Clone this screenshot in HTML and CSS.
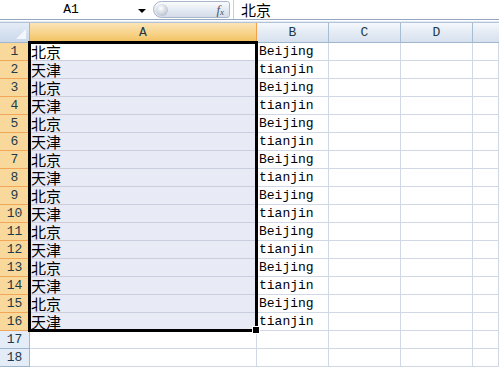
FILE: index.html
```html
<!DOCTYPE html>
<html>
<head>
<meta charset="utf-8">
<link rel="stylesheet" href="styles.css">
</head>
<body>
<div class="app">
  <div class="fbar">
    <div class="namebox"><span class="ref">A1</span><span class="arrow"></span></div>
    <div class="fxbtn"><span class="knob"></span><span class="fx">f<sub>x</sub></span></div>
    <div class="ftext">北京</div>
  </div>
  <div class="lines"></div>
  <div class="sheet">
    <div class="corner"><span class="tri"></span></div>
    <div class="ch sel">A</div><div class="ch">B</div><div class="ch">C</div><div class="ch">D</div><div class="ch last"></div>

    <div class="rh sel">1</div><div class="c a act cn">北京</div><div class="c">Beijing</div><div class="c"></div><div class="c"></div><div class="c"></div>
    <div class="rh sel">2</div><div class="c a cn">天津</div><div class="c">tianjin</div><div class="c"></div><div class="c"></div><div class="c"></div>
    <div class="rh sel">3</div><div class="c a cn">北京</div><div class="c">Beijing</div><div class="c"></div><div class="c"></div><div class="c"></div>
    <div class="rh sel">4</div><div class="c a cn">天津</div><div class="c">tianjin</div><div class="c"></div><div class="c"></div><div class="c"></div>
    <div class="rh sel">5</div><div class="c a cn">北京</div><div class="c">Beijing</div><div class="c"></div><div class="c"></div><div class="c"></div>
    <div class="rh sel">6</div><div class="c a cn">天津</div><div class="c">tianjin</div><div class="c"></div><div class="c"></div><div class="c"></div>
    <div class="rh sel">7</div><div class="c a cn">北京</div><div class="c">Beijing</div><div class="c"></div><div class="c"></div><div class="c"></div>
    <div class="rh sel">8</div><div class="c a cn">天津</div><div class="c">tianjin</div><div class="c"></div><div class="c"></div><div class="c"></div>
    <div class="rh sel">9</div><div class="c a cn">北京</div><div class="c">Beijing</div><div class="c"></div><div class="c"></div><div class="c"></div>
    <div class="rh sel">10</div><div class="c a cn">天津</div><div class="c">tianjin</div><div class="c"></div><div class="c"></div><div class="c"></div>
    <div class="rh sel">11</div><div class="c a cn">北京</div><div class="c">Beijing</div><div class="c"></div><div class="c"></div><div class="c"></div>
    <div class="rh sel">12</div><div class="c a cn">天津</div><div class="c">tianjin</div><div class="c"></div><div class="c"></div><div class="c"></div>
    <div class="rh sel">13</div><div class="c a cn">北京</div><div class="c">Beijing</div><div class="c"></div><div class="c"></div><div class="c"></div>
    <div class="rh sel">14</div><div class="c a cn">天津</div><div class="c">tianjin</div><div class="c"></div><div class="c"></div><div class="c"></div>
    <div class="rh sel">15</div><div class="c a cn">北京</div><div class="c">Beijing</div><div class="c"></div><div class="c"></div><div class="c"></div>
    <div class="rh sel">16</div><div class="c a cn">天津</div><div class="c">tianjin</div><div class="c"></div><div class="c"></div><div class="c"></div>
    <div class="rh">17</div><div class="c"></div><div class="c"></div><div class="c"></div><div class="c"></div><div class="c"></div>
    <div class="rh">18</div><div class="c"></div><div class="c"></div><div class="c"></div><div class="c"></div><div class="c"></div>

    <div class="selbox"></div>
    <div class="handle"></div>
  </div>
</div>
</body>
</html>
```

FILE: styles.css
```css
html, body {
  margin: 0;
  padding: 0;
  background: #ffffff;
}
.app {
  width: 499px;
  height: 368px;
  overflow: hidden;
  font-family: "Liberation Mono", "Noto Sans CJK SC", monospace;
  font-size: 13px;
  color: #000;
}
.fbar {
  display: flex;
  height: 19px;
  border-bottom: 1px solid #93a7c0;
  background: #fff;
}
.namebox {
  width: 153px;
  display: flex;
  align-items: center;
  position: relative;
}
.namebox .ref {
  flex: 1;
  text-align: center;
  padding-left: 4px;
  line-height: 19px;
}
.namebox .arrow {
  width: 0;
  height: 0;
  border-left: 4px solid transparent;
  border-right: 4px solid transparent;
  border-top: 4px solid #000;
  margin-right: 7px;
  margin-top: 2px;
}
.fxbtn {
  width: 77px;
  height: 17px;
  margin-top: 1px;
  box-sizing: border-box;
  border: 1px solid #a7b6ca;
  border-radius: 9px 3px 3px 9px;
  background: linear-gradient(#fafcfe, #e3e9f2 55%, #d5dde9);
  display: flex;
  align-items: center;
  justify-content: space-between;
  padding: 0 5px 0 2px;
}
.knob {
  width: 12px;
  height: 12px;
  border-radius: 50%;
  background: radial-gradient(circle at 40% 35%, #ffffff, #c9d0da 60%, #9ea8b6);
}
.fx {
  font-family: "Liberation Serif", serif;
  font-style: italic;
  font-size: 13px;
  color: #4a5566;
  line-height: 1;
}
.fx sub {
  font-size: 9px;
  vertical-align: -1px;
}
.ftext {
  flex: 1;
  border-left: 1px solid #c5d0de;
  margin-left: 3px;
  padding-left: 7px;
  font-family: "Noto Sans CJK SC", sans-serif;
  font-size: 15px;
  line-height: 19px;
}
.lines {
  height: 2px;
  border-top: 1px solid #fff;
  border-bottom: 1px solid #b3c2d6;
  background: #e6ecf4;
  box-sizing: content-box;
  height: 1px;
}
.sheet {
  position: relative;
  display: grid;
  grid-template-columns: 30px 227px 72px 72px 72px 1fr;
  grid-template-rows: 20px;
  grid-auto-rows: 18px;
  margin-top: 0;
}
.sheet > div {
  box-sizing: border-box;
}
.corner {
  background: linear-gradient(#e4ecf7, #cad8ea);
  border-right: 1px solid #9eb6ce;
  border-bottom: 1px solid #9eb6ce;
  position: relative;
}
.tri {
  position: absolute;
  right: 3px;
  bottom: 3px;
  width: 0;
  height: 0;
  border-left: 10px solid transparent;
  border-bottom: 10px solid #f3f6fb;
}
.ch {
  background: linear-gradient(#f5f8fc, #e4ebf4 50%, #d7e1ee);
  border-right: 1px solid #a7bdd3;
  border-bottom: 1px solid #9eb6ce;
  text-align: center;
  line-height: 19px;
  color: #1c3a4a;
}
.ch.sel {
  background: linear-gradient(#fbe4b6, #f8d48d 50%, #f1c15f);
  border-right: 1px solid #f2a14a;
  border-bottom: 1px solid #f29536;
}
.ch.last {
  border-right: none;
}
.rh {
  background: #e4ecf7;
  border-right: 1px solid #9eb6ce;
  border-bottom: 1px solid #9eb6ce;
  text-align: center;
  line-height: 17px;
  color: #1c3a4a;
}
.rh.sel {
  background: #f9d99b;
  border-right: 1px solid #f29536;
  border-bottom: 1px solid #f1a65a;
}
.c {
  border-right: 1px solid #d0d7e5;
  border-bottom: 1px solid #d0d7e5;
  line-height: 17px;
  padding-left: 2px;
  white-space: nowrap;
  overflow: visible;
}
.c.a {
  background: #e8eaf5;
  border-bottom-color: #c9cfdf;
}
.c.act {
  background: #fff;
}
.cn {
  font-family: "Noto Sans CJK SC", sans-serif;
  font-size: 15px;
  padding-left: 1px;
}
.selbox {
  position: absolute;
  left: 28px;
  top: 18px;
  width: 230px;
  height: 291px;
  box-sizing: border-box;
  border: 3px solid #000;
  pointer-events: none;
}
.handle {
  position: absolute;
  left: 253px;
  top: 304px;
  width: 6px;
  height: 6px;
  background: #000;
  outline: 1px solid #fff;
}
```
